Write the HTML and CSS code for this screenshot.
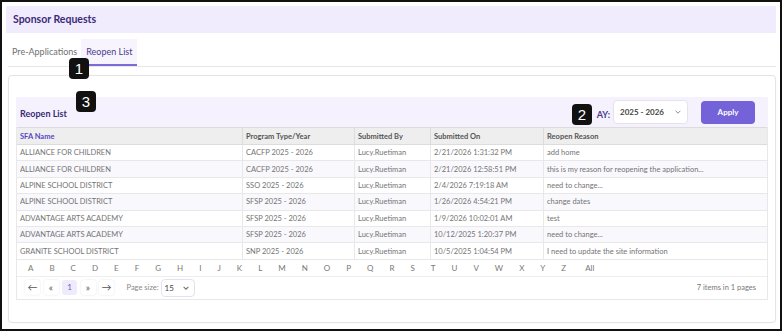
FILE: index.html
```html
<!DOCTYPE html>
<html lang="en">
<head>
  <meta charset="UTF-8">
  <title>Sponsor Requests</title>
  <link rel="stylesheet" href="styles.css">
</head>
<body>
  <div class="frame">
    <div class="page-title">Sponsor Requests</div>

    <div class="tabs">
      <div class="tab">Pre-Applications</div>
      <div class="tab active">Reopen List</div>
    </div>

    <div class="card">
      <div class="panel-head">
        <div class="panel-title">Reopen List</div>
        <div class="ay-filter">
          <span class="ay-label">AY:</span>
          <div class="select ay-select">
            <span>2025 - 2026</span>
            <svg width="8" height="8" viewBox="0 0 10 10"><path d="M2 3.5 L5 6.5 L8 3.5" fill="none" stroke="#888" stroke-width="1.2"/></svg>
          </div>
          <button class="apply-btn">Apply</button>
        </div>
      </div>

      <div class="grid">
        <table>
          <thead>
            <tr>
              <th class="col-name sortable">SFA Name</th>
              <th class="col-prog">Program Type/Year</th>
              <th class="col-by">Submitted By</th>
              <th class="col-on">Submitted On</th>
              <th>Reopen Reason</th>
            </tr>
          </thead>
          <tbody>
            <tr><td>ALLIANCE FOR CHILDREN</td><td>CACFP 2025 - 2026</td><td>Lucy.Ruetiman</td><td>2/21/2026 1:31:32 PM</td><td>add home</td></tr>
            <tr><td>ALLIANCE FOR CHILDREN</td><td>CACFP 2025 - 2026</td><td>Lucy.Ruetiman</td><td>2/21/2026 12:58:51 PM</td><td>this is my reason for reopening the application...</td></tr>
            <tr><td>ALPINE SCHOOL DISTRICT</td><td>SSO 2025 - 2026</td><td>Lucy.Ruetiman</td><td>2/4/2026 7:19:18 AM</td><td>need to change...</td></tr>
            <tr><td>ALPINE SCHOOL DISTRICT</td><td>SFSP 2025 - 2026</td><td>Lucy.Ruetiman</td><td>1/26/2026 4:54:21 PM</td><td>change dates</td></tr>
            <tr><td>ADVANTAGE ARTS ACADEMY</td><td>SFSP 2025 - 2026</td><td>Lucy.Ruetiman</td><td>1/9/2026 10:02:01 AM</td><td>test</td></tr>
            <tr><td>ADVANTAGE ARTS ACADEMY</td><td>SFSP 2025 - 2026</td><td>Lucy.Ruetiman</td><td>10/12/2025 1:20:37 PM</td><td>need to change...</td></tr>
            <tr><td>GRANITE SCHOOL DISTRICT</td><td>SNP 2025 - 2026</td><td>Lucy.Ruetiman</td><td>10/5/2025 1:04:54 PM</td><td>I need to update the site information</td></tr>
          </tbody>
        </table>

        <div class="alpha">
          <a>A</a><a>B</a><a>C</a><a>D</a><a>E</a><a>F</a><a>G</a><a>H</a><a>I</a><a>J</a><a>K</a><a>L</a><a>M</a>
          <a>N</a><a>O</a><a>P</a><a>Q</a><a>R</a><a>S</a><a>T</a><a>U</a><a>V</a><a>W</a><a>X</a><a>Y</a><a>Z</a><a class="all">All</a>
        </div>

        <div class="pager">
          <div class="pager-left">
            <span class="pg-btn">&larr;</span>
            <span class="pg-btn">&laquo;</span>
            <span class="pg-btn current">1</span>
            <span class="pg-btn">&raquo;</span>
            <span class="pg-btn">&rarr;</span>
            <span class="page-size-label">Page size:</span>
            <div class="select size-select">
              <span>15</span>
              <svg width="8" height="8" viewBox="0 0 10 10"><path d="M2 3.5 L5 6.5 L8 3.5" fill="none" stroke="#777" stroke-width="1.3"/></svg>
            </div>
          </div>
          <div class="pager-info">7 items in 1 pages</div>
        </div>
      </div>
    </div>

    <span class="badge badge-1">1</span>
    <span class="badge badge-2">2</span>
    <span class="badge badge-3">3</span>
  </div>
</body>
</html>
```

FILE: styles.css
```css
body {
  margin: 0;
  background: #fff;
  font-family: Lato, "Noto Sans", sans-serif;
  color: #555;
}
.frame {
  position: relative;
  width: 782px;
  height: 331px;
  box-sizing: border-box;
  border: 2px solid #111;
  padding: 4px 4px 0 4px;
}
.page-title {
  background: #f1ecfd;
  height: 27px;
  line-height: 27px;
  padding-left: 7px;
  font-size: 10.5px;
  font-weight: 700;
  color: #3a2a78;
}
.tabs {
  display: flex;
  margin: 6px 0 0 2px;
  border-bottom: 1px solid #e6e6e6;
  height: 27px;
}
.tab {
  font-size: 9px;
  color: #707070;
  padding: 0 4px;
  line-height: 25px;
}
.tab.active {
  background: #f7f4fe;
  color: #4a3a8c;
  padding: 0 5px;
  border-bottom: 2px solid #7b6bd6;
}
.card {
  margin: 8px 0 0 2px;
  height: 248px;
  border: 1px solid #e4e4e4;
  border-radius: 4px;
  box-sizing: border-box;
  padding: 21px 7px 0 7px;
  box-shadow: 0 0 2px rgba(0,0,0,0.06);
}
.panel-head {
  display: flex;
  justify-content: space-between;
  align-items: center;
  height: 30px;
  background: #f5f2fd;
  padding: 0 13px 0 4px;
}
.panel-title {
  font-size: 9px;
  font-weight: 700;
  color: #3a2a78;
  margin-top: 2px;
}
.ay-filter {
  display: flex;
  align-items: center;
}
.ay-label {
  font-size: 9px;
  font-weight: 700;
  color: #4a3a8c;
  margin-right: 3px;
  margin-top: 4px;
}
.select {
  display: flex;
  justify-content: space-between;
  align-items: center;
  background: #fff;
  border: 1px solid #e4e2ee;
  border-radius: 4px;
  box-sizing: border-box;
}
.ay-select {
  width: 75px;
  height: 24px;
  padding: 0 5px 0 6px;
  font-size: 8px;
  font-weight: 700;
  color: #444;
}
.apply-btn {
  margin-left: 13px;
  width: 54px;
  height: 23px;
  border: none;
  border-radius: 4px;
  background: #7462d8;
  color: #fff;
  font-family: inherit;
  font-size: 8px;
  font-weight: 700;
}
.grid {
  border: 1px solid #e8e8e8;
  border-top: none;
}
table {
  width: 100%;
  border-collapse: collapse;
  table-layout: fixed;
  font-size: 7.5px;
}
th {
  background: #eeeeee;
  text-align: left;
  font-weight: 700;
  color: #555;
  height: 16px;
  padding: 0 3px;
  border-right: 1px solid #dcdcdc;
  border-top: 1px solid #dcdcdc;
  border-bottom: 1px solid #dcdcdc;
}
th:last-child, td:last-child {
  border-right: none;
}
th.sortable {
  color: #5a44c8;
}
.col-name { width: 219px; }
.col-prog { width: 105px; }
.col-by { width: 69px; }
.col-on { width: 106px; }
td {
  height: 15.4px;
  padding: 0 3px;
  color: #747474;
  border-right: 1px solid #e8e8e8;
  border-bottom: 1px solid #e8e8e8;
  white-space: nowrap;
  overflow: hidden;
}
tbody tr:nth-child(even) td {
  background: #f9f8fc;
}
.alpha {
  display: flex;
  height: 16px;
  align-items: center;
  padding-left: 3px;
  border-bottom: 1px solid #eeeeee;
  font-size: 8px;
  color: #777;
}
.alpha a {
  padding: 0 8px;
}
.alpha a.all {
  margin-left: 3px;
}
.pager {
  display: flex;
  justify-content: space-between;
  align-items: center;
  height: 22px;
  padding: 0 11px 0 8px;
}
.pager-left {
  display: flex;
  align-items: center;
}
.pg-btn {
  width: 15px;
  height: 15px;
  line-height: 14px;
  text-align: center;
  margin-right: 3.5px;
  font-size: 10px;
  color: #555;
  border-radius: 3px;
  box-shadow: 0 0 2px rgba(0,0,0,0.12);
}
.pg-btn.current {
  background: #efebfb;
  color: #6a5ac8;
  font-size: 8px;
  box-shadow: none;
}
.page-size-label {
  margin-left: 9px;
  font-size: 7.5px;
  color: #888;
}
.size-select {
  width: 34px;
  height: 18px;
  margin-left: 2px;
  padding: 0 4px 0 3px;
  font-size: 8px;
  color: #444;
}
.pager-info {
  font-size: 7.5px;
  color: #777;
}
.badge {
  position: absolute;
  width: 20px;
  height: 21px;
  line-height: 21px;
  text-align: center;
  background: #111;
  color: #fff;
  border-radius: 4px;
  font-family: "Liberation Sans", Arial, sans-serif;
  font-size: 15px;
}
.badge-1 { left: 67px; top: 56px; }
.badge-2 { left: 570px; top: 102px; }
.badge-3 { left: 74px; top: 89px; }
```
